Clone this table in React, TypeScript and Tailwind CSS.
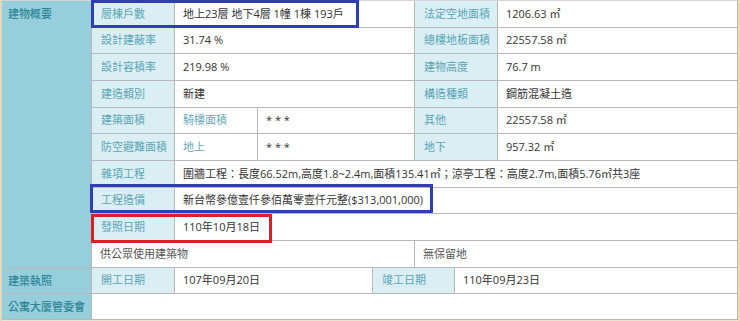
import React from 'react'

const font = { fontFamily: '"Open Sans", "Noto Sans CJK TC", sans-serif' }

function Cat({ className = '', children }: { className?: string; children?: React.ReactNode }) {
  return (
    <div className={`bg-[#96cfdb] pl-[6px] text-[#2e8597] font-medium leading-[26px] ${className}`}>
      {children}
    </div>
  )
}

function Label({ className = '', children }: { className?: string; children: React.ReactNode }) {
  return (
    <div className={`flex items-center bg-[#dbeef3] pl-[9px] text-[#58a5b7] ${className}`}>{children}</div>
  )
}

function Value({ className = '', children }: { className?: string; children?: React.ReactNode }) {
  return (
    <div className={`flex items-center bg-white pl-2 text-[#333] whitespace-nowrap ${className}`}>{children}</div>
  )
}

export default function App() {
  return (
    <div className="relative w-[740px] h-[321px] bg-[#ece3d0] text-[11px] overflow-hidden" style={font}>
      <div className="border-l-2 border-[#e4d8bf] border-r-2 border-r-[#f5d6ad] pb-px">
        <div className="grid grid-cols-[89px_82px_82px_114px_41px_39px_42px_239px] grid-rows-[26px_25px_26px_26px_25px_26px_26px_25px_26px_26px_25px_25px] gap-px bg-[#b8b8b8] border-y border-r border-[#b8b8b8] border-t-[#d4d4d4]">
          {/* 建物概要 */}
          <Cat className="row-span-10">建物概要</Cat>

          <Label>層棟戶數</Label>
          <Value className="col-span-3">地上23層 地下4層 1幢 1棟 193戶</Value>
          <Label className="col-span-2">法定空地面積</Label>
          <Value>1206.63 ㎡</Value>

          <Label>設計建蔽率</Label>
          <Value className="col-span-3">31.74 %</Value>
          <Label className="col-span-2">總樓地板面積</Label>
          <Value>22557.58 ㎡</Value>

          <Label>設計容積率</Label>
          <Value className="col-span-3">219.98 %</Value>
          <Label className="col-span-2">建物高度</Label>
          <Value>76.7 m</Value>

          <Label>建造類別</Label>
          <Value className="col-span-3">新建</Value>
          <Label className="col-span-2">構造種類</Label>
          <Value>鋼筋混凝土造</Value>

          <Label>建築面積</Label>
          <Value className="!text-[#6aa9b8]">騎樓面積</Value>
          <Value className="col-span-2">* * *</Value>
          <Label className="col-span-2">其他</Label>
          <Value>22557.58 ㎡</Value>

          <Label>防空避難面積</Label>
          <Value className="!text-[#6aa9b8]">地上</Value>
          <Value className="col-span-2">* * *</Value>
          <Label className="col-span-2">地下</Label>
          <Value>957.32 ㎡</Value>

          <Label>雜項工程</Label>
          <Value className="col-span-6">
            圍牆工程：長度66.52m,高度1.8~2.4m,面積135.41㎡；涼亭工程：高度2.7m,面積5.76㎡共3座
          </Value>

          <Label>工程造價</Label>
          <Value className="col-span-6">新台幣參億壹仟參佰萬零壹仟元整($313,001,000)</Value>

          <Label>發照日期</Label>
          <Value className="col-span-6">110年10月18日</Value>

          <Value className="col-span-4 pl-[8px] !text-[#555]">供公眾使用建築物</Value>
          <Value className="col-span-3 !text-[#555]">無保留地</Value>

          {/* 建築執照 */}
          <Cat>建築執照</Cat>
          <Label>開工日期</Label>
          <Value className="col-span-2">107年09月20日</Value>
          <Label className="col-span-2 pl-2">竣工日期</Label>
          <Value className="col-span-2">110年09月23日</Value>

          {/* 公寓大廈管委會 */}
          <Cat>公寓大廈管委會</Cat>
          <Value className="col-span-7" />
        </div>
      </div>

      {/* highlight boxes */}
      <div className="absolute left-[91px] top-0 w-[268px] h-[28px] border-[3px] border-[#2f3fb3]" />
      <div className="absolute left-[90px] top-[184px] w-[343px] h-[29px] border-[3px] border-[#2f3fb3]" />
      <div className="absolute left-[91px] top-[214px] w-[181px] h-[29px] border-[3px] border-[#dc1f26]" />
    </div>
  )
}
